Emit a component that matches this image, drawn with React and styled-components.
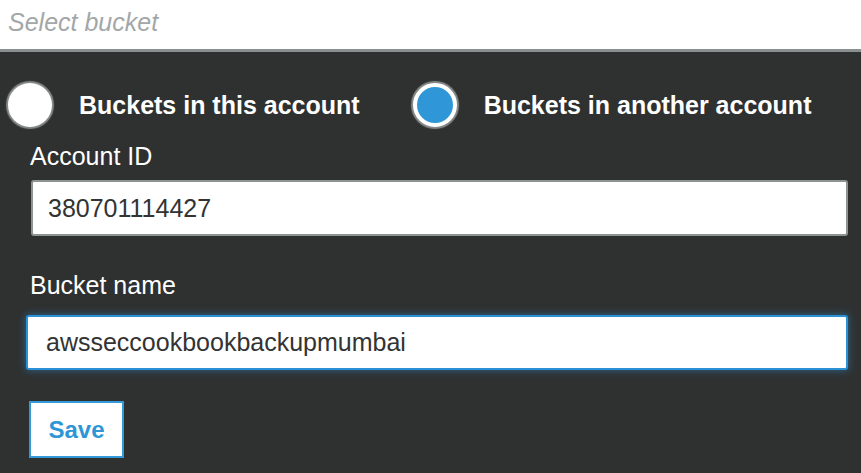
import React from "react";
import styled, { createGlobalStyle } from "styled-components";

const Global = createGlobalStyle`
  html, body { margin: 0; padding: 0; background: #2f3131; }
  body { font-family: "Liberation Sans", Arial, sans-serif; }
  * { box-sizing: border-box; }
`;

const Page = styled.div`
  width: 861px;
  height: 473px;
  overflow: hidden;
  background: #2f3131;
  display: flex;
  flex-direction: column;
`;

const SelectBar = styled.div`
  height: 52px;
  background: #fff;
  border-bottom: 3px solid #8a8f8f;
  padding-left: 8px;
  font-size: 25px;
  line-height: 44px;
  font-style: italic;
  color: #a3a7a7;
`;

const Panel = styled.div`
  display: flex;
  flex-direction: column;
  padding: 31px 13px 0 8px;
`;

const RadioRow = styled.div`
  display: flex;
  align-items: center;
  gap: 53px;
`;

const RadioOption = styled.label`
  display: flex;
  align-items: center;
  gap: 27px;
  font-size: 25px;
  font-weight: bold;
  line-height: 30px;
  color: #fff;
`;

const RadioDot = styled.span`
  width: 44px;
  height: 44px;
  border-radius: 50%;
  flex: none;
  background: ${(p) => (p.$checked ? "#2f97d7" : "#fff")};
  border: ${(p) => (p.$checked ? "4px solid #fff" : "none")};
  box-shadow: 0 0 1px 2px rgba(150, 155, 155, 0.85);
`;

const Form = styled.div`
  display: flex;
  flex-direction: column;
  align-items: flex-start;
  padding-left: 18px;
  margin-top: 15px;
`;

const Label = styled.div`
  font-size: 25px;
  line-height: 28px;
  color: #fff;
  margin-left: ${(p) => p.$ml || 4}px;
  margin-top: ${(p) => p.$mt || 0}px;
`;

const TextInput = styled.input`
  display: block;
  height: ${(p) => (p.$focused ? 55 : 56)}px;
  width: ${(p) => (p.$focused ? 822 : 817)}px;
  margin-left: ${(p) => (p.$focused ? 0 : 5)}px;
  margin-top: ${(p) => p.$mt}px;
  padding: 0 0 0 ${(p) => (p.$focused ? 18 : 15)}px;
  font-family: "Liberation Sans", Arial, sans-serif;
  font-size: 25px;
  color: #333;
  background: #fff;
  border-radius: 3px;
  outline: none;
  border: ${(p) => (p.$focused ? "2px solid #2c90d6" : "2px solid #8e9494")};
  box-shadow: ${(p) =>
    p.$focused ? "0 0 7px 1px rgba(44, 144, 214, 0.45)" : "none"};
`;

const SaveButton = styled.button`
  margin-top: 31px;
  margin-left: 3px;
  width: 95px;
  height: 57px;
  background: #fff;
  border: 2px solid #3399d9;
  border-radius: 0;
  color: #2f96d6;
  font-family: "Liberation Sans", Arial, sans-serif;
  font-size: 24px;
  font-weight: bold;
  padding: 0;
`;

export default function App() {
  return (
    <Page>
      <Global />
      <SelectBar>Select bucket</SelectBar>
      <Panel>
        <RadioRow>
          <RadioOption>
            <RadioDot />
            Buckets in this account
          </RadioOption>
          <RadioOption>
            <RadioDot $checked />
            Buckets in another account
          </RadioOption>
        </RadioRow>
        <Form>
          <Label>Account ID</Label>
          <TextInput $mt={10} defaultValue="380701114427" readOnly />
          <Label $mt={35}>Bucket name</Label>
          <TextInput $focused $mt={16} defaultValue="awsseccookbookbackupmumbai" readOnly />
          <SaveButton>Save</SaveButton>
        </Form>
      </Panel>
    </Page>
  );
}
